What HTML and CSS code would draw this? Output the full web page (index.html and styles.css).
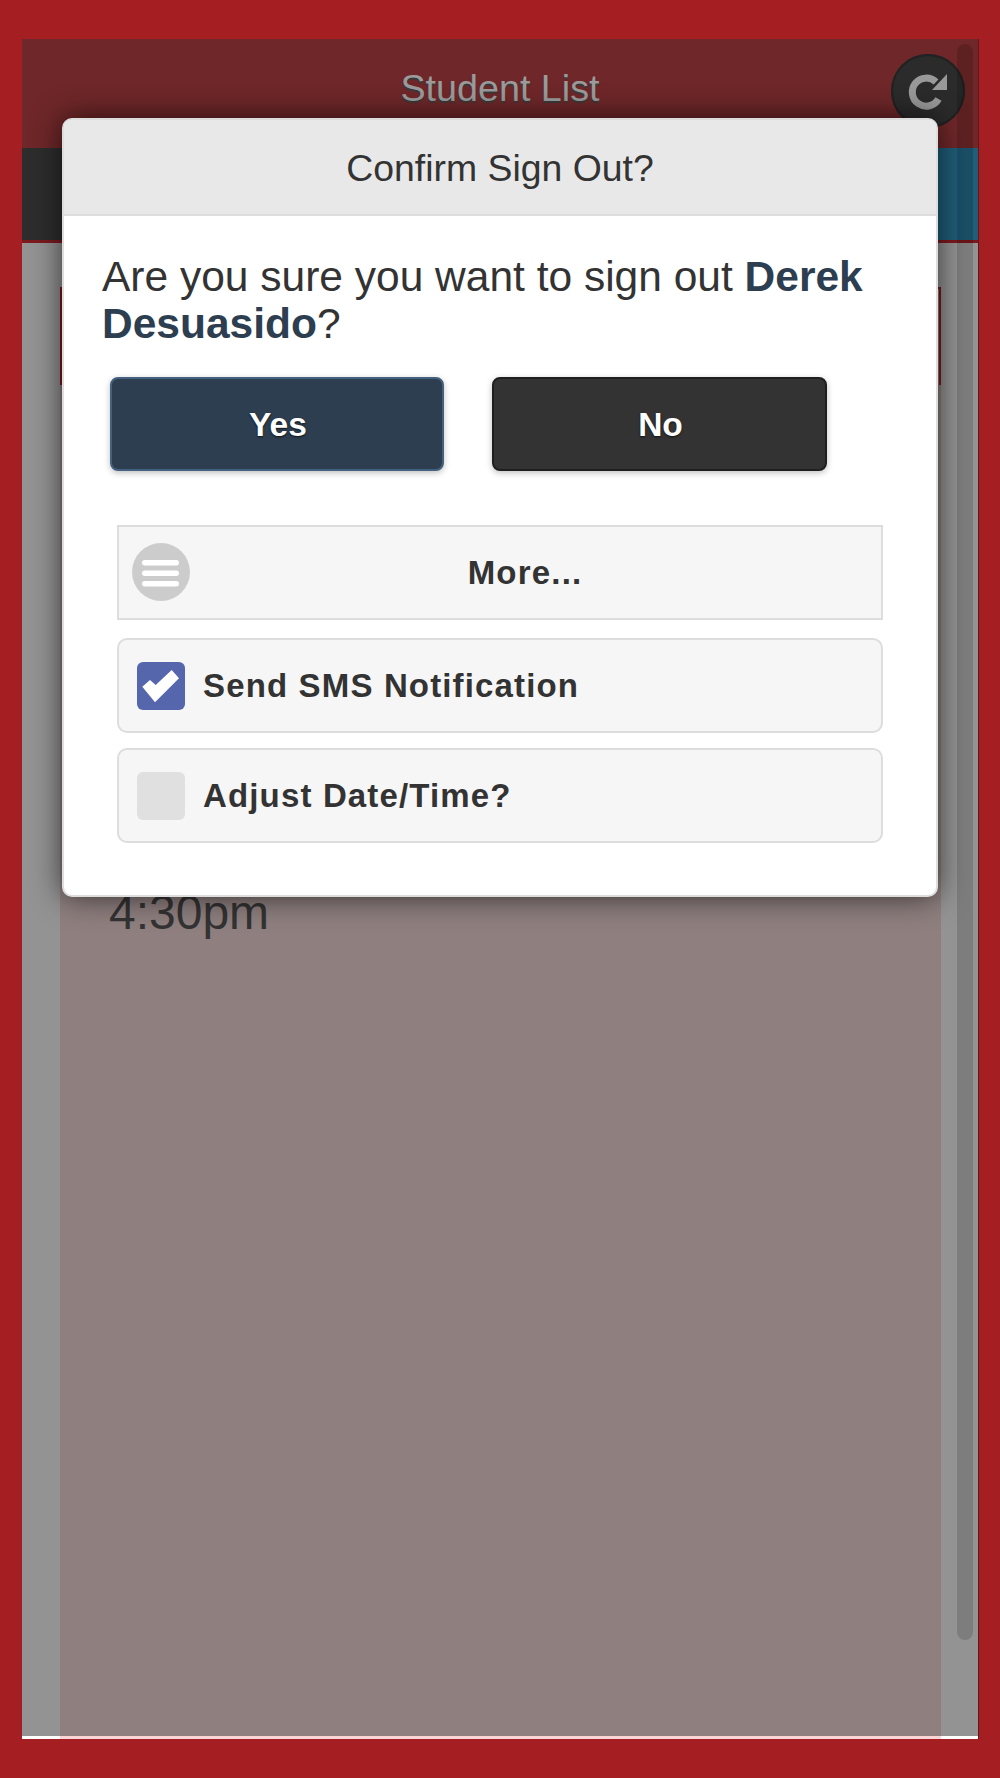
FILE: index.html
```html
<!DOCTYPE html>
<html lang="en">
<head>
    <meta charset="UTF-8">
    <meta name="viewport" content="width=device-width, initial-scale=1.0">
    <title>Student List</title>
    <link rel="stylesheet" href="styles.css">
</head>
<body>
    <div class="app">
        <header class="topbar">
            <h1>Student List</h1>
            <button class="refresh" aria-label="Refresh">
                <svg width="74" height="74" viewBox="0 0 74 74">
                    <path d="M45 28A14 14 0 1 0 47.5 45" fill="none" stroke="#999" stroke-width="7"/>
                    <polygon points="56,20 56,36 41,36" fill="#999"/>
                </svg>
            </button>
        </header>

        <nav class="tabs">
            <div class="tab tab-dark"></div>
            <div class="tab tab-blue"></div>
        </nav>

        <main class="content">
            <div class="list">
                <div class="list-item"></div>
                <div class="time">4:30pm</div>
            </div>
        </main>

        <div class="scrollbar"></div>

        <div class="dialog">
            <div class="dialog-title">Confirm Sign Out?</div>
            <div class="dialog-body">
                <p class="message">Are you sure you want to sign out <strong>Derek Desuasido</strong>?</p>

                <div class="actions">
                    <button class="btn btn-yes">Yes</button>
                    <button class="btn btn-no">No</button>
                </div>

                <div class="more">
                    <svg class="more-icon" width="58" height="58" viewBox="0 0 58 58">
                        <circle cx="29" cy="29" r="29" fill="#ccc"/>
                        <rect x="10" y="17" width="37" height="5.5" rx="2.7" fill="#fff"/>
                        <rect x="10" y="27.5" width="37" height="5.5" rx="2.7" fill="#fff"/>
                        <rect x="10" y="38" width="37" height="5.5" rx="2.7" fill="#fff"/>
                    </svg>
                    <span>More...</span>
                </div>

                <div class="option">
                    <span class="checkbox checked">
                        <svg width="48" height="48" viewBox="0 0 48 48">
                            <polygon points="5.3,24.7 13,18 18.7,23 34.7,8 42,16.3 18,40.3" fill="#fff"/>
                        </svg>
                    </span>
                    <span>Send SMS Notification</span>
                </div>

                <div class="option">
                    <span class="checkbox"></span>
                    <span>Adjust Date/Time?</span>
                </div>
            </div>
        </div>
    </div>
</body>
</html>
```

FILE: styles.css
```css
html, body {
    margin: 0;
    height: 100%;
}
body {
    box-sizing: border-box;
    height: 1778px;
    padding: 39px 22px 39px;
    background: #a51e22;
    font-family: "Liberation Sans", Arial, sans-serif;
    color: #333;
}
.app {
    position: relative;
    display: flex;
    flex-direction: column;
    height: 100%;
    background: #fff;
    box-shadow: 1px 0 0 #5a1a1c;
}
.topbar {
    flex: none;
    height: 109px;
    display: flex;
    align-items: center;
    justify-content: center;
    background: #6f2729;
}
.topbar h1 {
    margin: 0 0 10px;
    font-size: 37.7px;
    font-weight: normal;
    color: #9b9b9b;
    text-shadow: 0 2px 1px #3a3a3a;
}
.refresh {
    position: absolute;
    top: 15px;
    left: 869px;
    width: 74px;
    height: 74px;
    padding: 0;
    border: 0;
    border-radius: 50%;
    background: #2b2b2b;
    box-shadow: inset 0 0 0 2px #222;
}
.tabs {
    flex: none;
    height: 92px;
    display: flex;
    border-bottom: 3px solid #7d1a1e;
}
.tab {
    flex: 1;
}
.tab-dark {
    background: #2d2d2d;
}
.tab-blue {
    background: #1f5d78;
}
.content {
    flex: 1;
    display: flex;
    padding: 44px 37px 0 38px;
    background: #939393;
    border-bottom: 3px solid #fff;
    min-height: 0;
}
.list {
    flex: 1;
    margin-bottom: -3px;
    border-bottom: 3px solid #fbd5d5;
    background: #8f7f7f;
}
.list-item {
    height: 98px;
    box-sizing: border-box;
    border: 2px solid #7d1a1e;
    border-bottom: 0;
}
.time {
    margin: 498px 0 0 49px;
    font-size: 48px;
    line-height: 60px;
    color: #333;
}
.scrollbar {
    position: absolute;
    top: 5px;
    left: 935px;
    width: 16px;
    height: 1596px;
    border-radius: 8px;
    background: rgba(0, 0, 0, 0.15);
}
.dialog {
    position: absolute;
    top: 79px;
    left: 40px;
    width: 876px;
    height: 779px;
    box-sizing: border-box;
    border: 2px solid #ddd;
    border-radius: 10px;
    background: #fff;
    box-shadow: 0 0 30px rgba(0, 0, 0, 0.65);
    overflow: hidden;
}
.dialog-title {
    height: 96px;
    box-sizing: border-box;
    border-bottom: 2px solid #ddd;
    background: #e8e8e8;
    font-size: 37.4px;
    line-height: 96px;
    text-align: center;
}
.dialog-body {
    padding: 37px 38px 0;
}
.message {
    margin: 0;
    font-size: 42.5px;
    line-height: 47px;
}
.message strong {
    color: #2c3e50;
}
.actions {
    display: flex;
    gap: 48px;
    margin: 30px 0 54px 8px;
}
.btn {
    width: 334px;
    height: 94px;
    padding: 2px 0 0 2px;
    border-radius: 8px;
    font-family: inherit;
    font-size: 33.5px;
    font-weight: bold;
    color: #fff;
    text-shadow: 0 1px 2px #111;
    box-shadow: 0 2px 6px rgba(0, 0, 0, 0.25);
}
.btn-yes {
    border: 2px solid #44617f;
    background: #2c3e50;
}
.btn-no {
    width: 335px;
    border: 2px solid #1f1f1f;
    background: #333;
}
.more {
    position: relative;
    height: 95px;
    box-sizing: border-box;
    margin: 0 15px 18px 15px;
    border: 2px solid #ddd;
    background: #f6f6f6;
    font-size: 33px;
    font-weight: bold;
    line-height: 91px;
    text-align: center;
    letter-spacing: 1.2px;
}
.more span {
    margin-left: 50px;
}
.more-icon {
    position: absolute;
    top: 16px;
    left: 13px;
}
.option {
    display: flex;
    align-items: center;
    gap: 18px;
    height: 95px;
    box-sizing: border-box;
    margin: 0 15px 15px 15px;
    padding-left: 18px;
    border: 2px solid #ddd;
    border-radius: 10px;
    background: #f6f6f6;
    font-size: 33px;
    font-weight: bold;
    letter-spacing: 1.15px;
}
.checkbox {
    flex: none;
    width: 48px;
    height: 48px;
    border-radius: 6px;
    background: #e0e0e0;
}
.checkbox.checked {
    background: #5566ad;
}
```
